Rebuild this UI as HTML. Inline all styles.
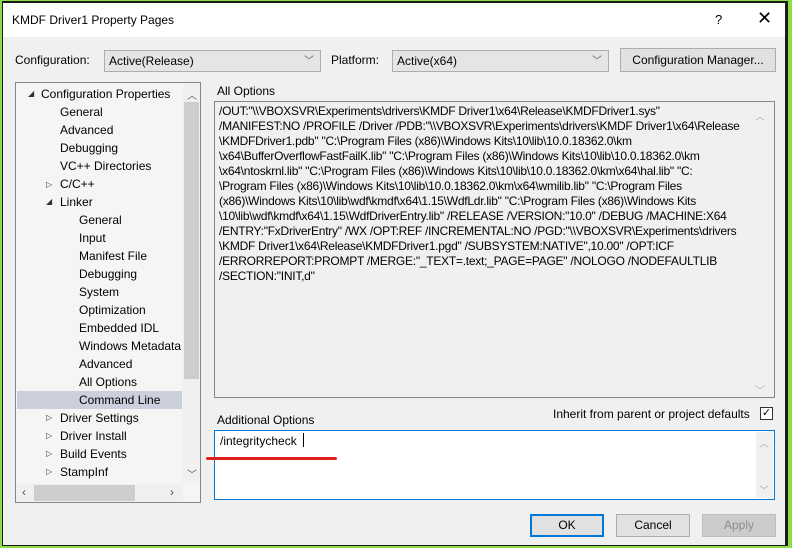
<!DOCTYPE html>
<html><head><meta charset="utf-8"><style>
*{margin:0;padding:0;box-sizing:border-box}
body{width:792px;height:548px;background:#8fdc4a;position:relative;overflow:hidden;font-family:"Liberation Sans",sans-serif;font-size:12px;color:#000}
.a{position:absolute}
#win{left:2px;top:1px;width:786px;height:545px;background:#1c1c1c}
#in{left:3px;top:3px;width:782px;height:542px;background:#f0f0f0}
#title{left:3px;top:3px;width:782px;height:34px;background:#fff}
.combo{background:#e5e5e5;border:1px solid #adadad;height:22px;padding:3px 4px;line-height:14px}
.chev{position:absolute;right:6px;top:4px;color:#555;font-size:10px}
.btn{background:#e1e1e1;border:1px solid #adadad;height:23px;text-align:center;line-height:21px}
.tree div{height:18px;line-height:18px;white-space:nowrap}
.tri{position:absolute;font-size:8px;color:#333}
#opts div{height:15px;line-height:15px;white-space:nowrap}
.sb{background:#f0f0f0}
</style></head><body>
<div class="a" id="win"></div>
<div class="a" id="in"></div>
<div class="a" id="title"></div>
<div class="a" style="left:12px;top:13px">KMDF Driver1 Property Pages</div>
<div class="a" style="left:715px;top:12px;font-size:13px">?</div>
<div class="a" style="left:757px;top:8px;font-size:18px;font-weight:lighter">✕</div>

<div class="a" style="left:15px;top:53px">Configuration:</div>
<div class="a combo" style="left:104px;top:50px;width:217px">Active(Release)<span class="chev">﹀</span></div>
<div class="a" style="left:331px;top:53px">Platform:</div>
<div class="a combo" style="left:392px;top:50px;width:217px">Active(x64)<span class="chev">﹀</span></div>
<div class="a btn" style="left:620px;top:48px;width:156px;height:24px;line-height:22px">Configuration Manager...</div>

<div class="a" style="left:15px;top:82px;width:186px;height:421px;background:#f5f5f5;border:1px solid #828790"></div>
<div class="a" style="left:183px;top:83px;width:17px;height:400px;background:#f0f0f0"></div>
<div class="a" style="left:184px;top:102px;width:15px;height:277px;background:#cdcdcd"></div>
<div class="a" style="left:187px;top:87px;font-size:10px;color:#555">︿</div>
<div class="a" style="left:187px;top:466px;font-size:10px;color:#555">﹀</div>
<div class="a" style="left:16px;top:484px;width:167px;height:18px;background:#f0f0f0"></div>
<div class="a" style="left:34px;top:485px;width:101px;height:16px;background:#cdcdcd"></div>
<div class="a" style="left:22px;top:485px;color:#555">‹</div>
<div class="a" style="left:170px;top:485px;color:#555">›</div>
<div class="a" style="left:17px;top:391px;width:165px;height:18px;background:#ccd0dc"></div>
<div class="a tree" style="left:0;top:85px">
<div style="padding-left:41px">Configuration Properties</div>
<div style="padding-left:60px">General</div>
<div style="padding-left:60px">Advanced</div>
<div style="padding-left:60px">Debugging</div>
<div style="padding-left:60px">VC++ Directories</div>
<div style="padding-left:60px">C/C++</div>
<div style="padding-left:60px">Linker</div>
<div style="padding-left:79px">General</div>
<div style="padding-left:79px">Input</div>
<div style="padding-left:79px">Manifest File</div>
<div style="padding-left:79px">Debugging</div>
<div style="padding-left:79px">System</div>
<div style="padding-left:79px">Optimization</div>
<div style="padding-left:79px">Embedded IDL</div>
<div style="width:181px;overflow:hidden;padding-left:79px">Windows Metadata</div>
<div style="padding-left:79px">Advanced</div>
<div style="padding-left:79px">All Options</div>
<div style="padding-left:79px">Command Line</div>
<div style="padding-left:60px">Driver Settings</div>
<div style="padding-left:60px">Driver Install</div>
<div style="padding-left:60px">Build Events</div>
<div style="padding-left:60px">StampInf</div>
</div>
<div class="a tri" style="left:28px;top:89px">◢</div>
<div class="a tri" style="left:46px;top:180px">▷</div>
<div class="a tri" style="left:46px;top:197px">◢</div>
<div class="a tri" style="left:46px;top:413px">▷</div>
<div class="a tri" style="left:46px;top:431px">▷</div>
<div class="a tri" style="left:46px;top:449px">▷</div>
<div class="a tri" style="left:46px;top:467px">▷</div>

<div class="a" style="left:217px;top:84px">All Options</div>
<div class="a" style="left:214px;top:101px;width:561px;height:297px;border:1px solid #828790;background:#f0f0f0"></div>
<div class="a" style="left:755px;top:108px;font-size:10px;color:#aaa">︿</div>
<div class="a" style="left:755px;top:382px;font-size:10px;color:#aaa">﹀</div>
<div class="a" id="opts" style="left:219px;top:104px;letter-spacing:-0.25px">
<div>/OUT:"\\VBOXSVR\Experiments\drivers\KMDF Driver1\x64\Release\KMDFDriver1.sys"</div>
<div>/MANIFEST:NO /PROFILE /Driver /PDB:"\\VBOXSVR\Experiments\drivers\KMDF Driver1\x64\Release</div>
<div>\KMDFDriver1.pdb" "C:\Program Files (x86)\Windows Kits\10\lib\10.0.18362.0\km</div>
<div>\x64\BufferOverflowFastFailK.lib" "C:\Program Files (x86)\Windows Kits\10\lib\10.0.18362.0\km</div>
<div>\x64\ntoskrnl.lib" "C:\Program Files (x86)\Windows Kits\10\lib\10.0.18362.0\km\x64\hal.lib" "C:</div>
<div>\Program Files (x86)\Windows Kits\10\lib\10.0.18362.0\km\x64\wmilib.lib" "C:\Program Files</div>
<div>(x86)\Windows Kits\10\lib\wdf\kmdf\x64\1.15\WdfLdr.lib" "C:\Program Files (x86)\Windows Kits</div>
<div>\10\lib\wdf\kmdf\x64\1.15\WdfDriverEntry.lib" /RELEASE /VERSION:"10.0" /DEBUG /MACHINE:X64</div>
<div>/ENTRY:"FxDriverEntry" /WX /OPT:REF /INCREMENTAL:NO /PGD:"\\VBOXSVR\Experiments\drivers</div>
<div>\KMDF Driver1\x64\Release\KMDFDriver1.pgd" /SUBSYSTEM:NATIVE",10.00" /OPT:ICF</div>
<div>/ERRORREPORT:PROMPT /MERGE:"_TEXT=.text;_PAGE=PAGE" /NOLOGO /NODEFAULTLIB</div>
<div>/SECTION:"INIT,d"</div>
</div>

<div class="a" style="left:217px;top:413px">Additional Options</div>
<div class="a" style="left:553px;top:407px">Inherit from parent or project defaults</div>
<div class="a" style="left:760px;top:407px;width:13px;height:13px;border:1px solid #333;background:#fff;font-size:11px;line-height:11px;text-align:center">✓</div>
<div class="a" style="left:214px;top:430px;width:561px;height:70px;border:1px solid #0078d7;background:#fff"></div>
<div class="a" style="left:756px;top:432px;width:17px;height:66px;background:#f0f0f0"></div>
<div class="a" style="left:759px;top:435px;font-size:10px;color:#aaa">︿</div>
<div class="a" style="left:759px;top:482px;font-size:10px;color:#aaa">﹀</div>
<div class="a" style="left:220px;top:434px">/integritycheck</div>
<div class="a" style="left:303px;top:433px;width:1px;height:14px;background:#000"></div>
<div class="a" style="left:206px;top:457px;width:131px;height:3px;background:#e0201c;border-radius:2px"></div>

<div class="a btn" style="left:530px;top:514px;width:74px;border:2px solid #0078d7;line-height:19px">OK</div>
<div class="a btn" style="left:616px;top:514px;width:74px">Cancel</div>
<div class="a btn" style="left:702px;top:514px;width:74px;background:#ccc;border-color:#bfbfbf;color:#8d8d8d">Apply</div>
</body></html>
